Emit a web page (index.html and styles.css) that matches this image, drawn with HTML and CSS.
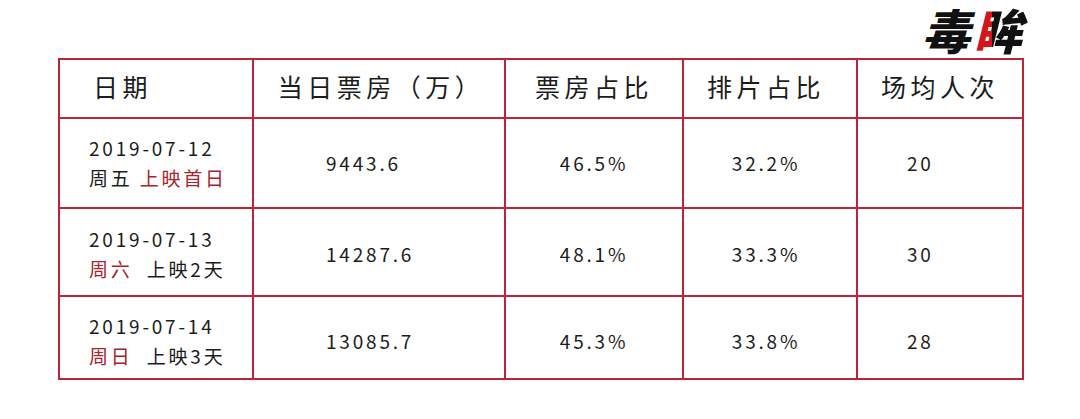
FILE: index.html
```html
<!DOCTYPE html>
<html lang="zh-CN">
<head>
<meta charset="utf-8">
<title>毒眸 票房</title>
<link rel="stylesheet" href="styles.css">
</head>
<body>
<div class="page">
  <header class="top">
    <div class="logo"><span class="logo-a">毒</span><span class="logo-b">眸</span></div>
  </header>
  <div class="grid">
    <div class="cell head c1">日期</div>
    <div class="cell head c2h">当日票房（万）</div>
    <div class="cell head c3">票房占比</div>
    <div class="cell head c4">排片占比</div>
    <div class="cell head c5h">场均人次</div>

    <div class="cell r1 c1 date"><span>2019-07-12</span><span>周五 <em class="red">上映首日</em></span></div>
    <div class="cell r1 c2">9443.6</div>
    <div class="cell r1 c3">46.5%</div>
    <div class="cell r1 c4">32.2%</div>
    <div class="cell r1 c5">20</div>

    <div class="cell r2 c1 date"><span>2019-07-13</span><span><em class="red">周六</em>&nbsp; 上映2天</span></div>
    <div class="cell r2 c2">14287.6</div>
    <div class="cell r2 c3">48.1%</div>
    <div class="cell r2 c4">33.3%</div>
    <div class="cell r2 c5">30</div>

    <div class="cell r3 c1 date"><span>2019-07-14</span><span><em class="red">周日</em>&nbsp; 上映3天</span></div>
    <div class="cell r3 c2">13085.7</div>
    <div class="cell r3 c3">45.3%</div>
    <div class="cell r3 c4">33.8%</div>
    <div class="cell r3 c5">28</div>
  </div>
</div>
</body>
</html>
```

FILE: styles.css
```css
html, body {
  margin: 0;
  padding: 0;
  background: #ffffff;
}

body {
  width: 1080px;
  height: 419px;
  overflow: hidden;
  font-family: "Noto Sans CJK SC", "Noto Sans", sans-serif;
  color: #1c1c1c;
}

.page {
  display: flex;
  flex-direction: column;
  padding-left: 58px;
}

.top {
  height: 58px;
  width: 966px;
  display: flex;
  justify-content: flex-end;
  align-items: flex-start;
}

.logo {
  margin-top: 3px;
  margin-right: -6px;
  display: flex;
  font-size: 48px;
  line-height: 52px;
  font-weight: 900;
  font-style: italic;
}

.logo-a {
  color: #111;
  padding: 0 8px 0 0;
  margin-right: -6px;
}

.logo-b {
  padding: 0 8px 0 2px;
  background: linear-gradient(90deg, #111 0, #111 4%, #d4161b 4%, #d4161b 35%, #111 35%, #111 100%);
  -webkit-background-clip: text;
  background-clip: text;
  color: transparent;
}

.grid {
  width: 962px;
  padding: 2px;
  background: #c0223a;
  display: grid;
  grid-template-columns: 192px 250px 176px 172px 164px;
  grid-template-rows: 57px 88px 86px 81px;
  gap: 2px;
}

.cell {
  background: #ffffff;
  display: flex;
  align-items: center;
  font-size: 19px;
  letter-spacing: 2.8px;
  line-height: 30px;
  box-sizing: border-box;
}

.head {
  font-size: 25px;
  letter-spacing: 4.5px;
  padding-bottom: 6px;
}

.c1 { padding-left: 29px; }
.head.c1 { padding-left: 33px; }
.c2h { justify-content: center; padding-left: 4px; }
.c2 { padding-left: 72px; }
.c3 { justify-content: center; }
.c4 { justify-content: center; padding-right: 8px; }
.c5h { justify-content: center; }
.c5 { padding-left: 49px; }

.date {
  flex-direction: column;
  align-items: flex-start;
  justify-content: center;
}

.r2 { padding-top: 4px; }
.r3 { padding-top: 6px; }

.red {
  font-style: normal;
  color: #a8232b;
}
```
